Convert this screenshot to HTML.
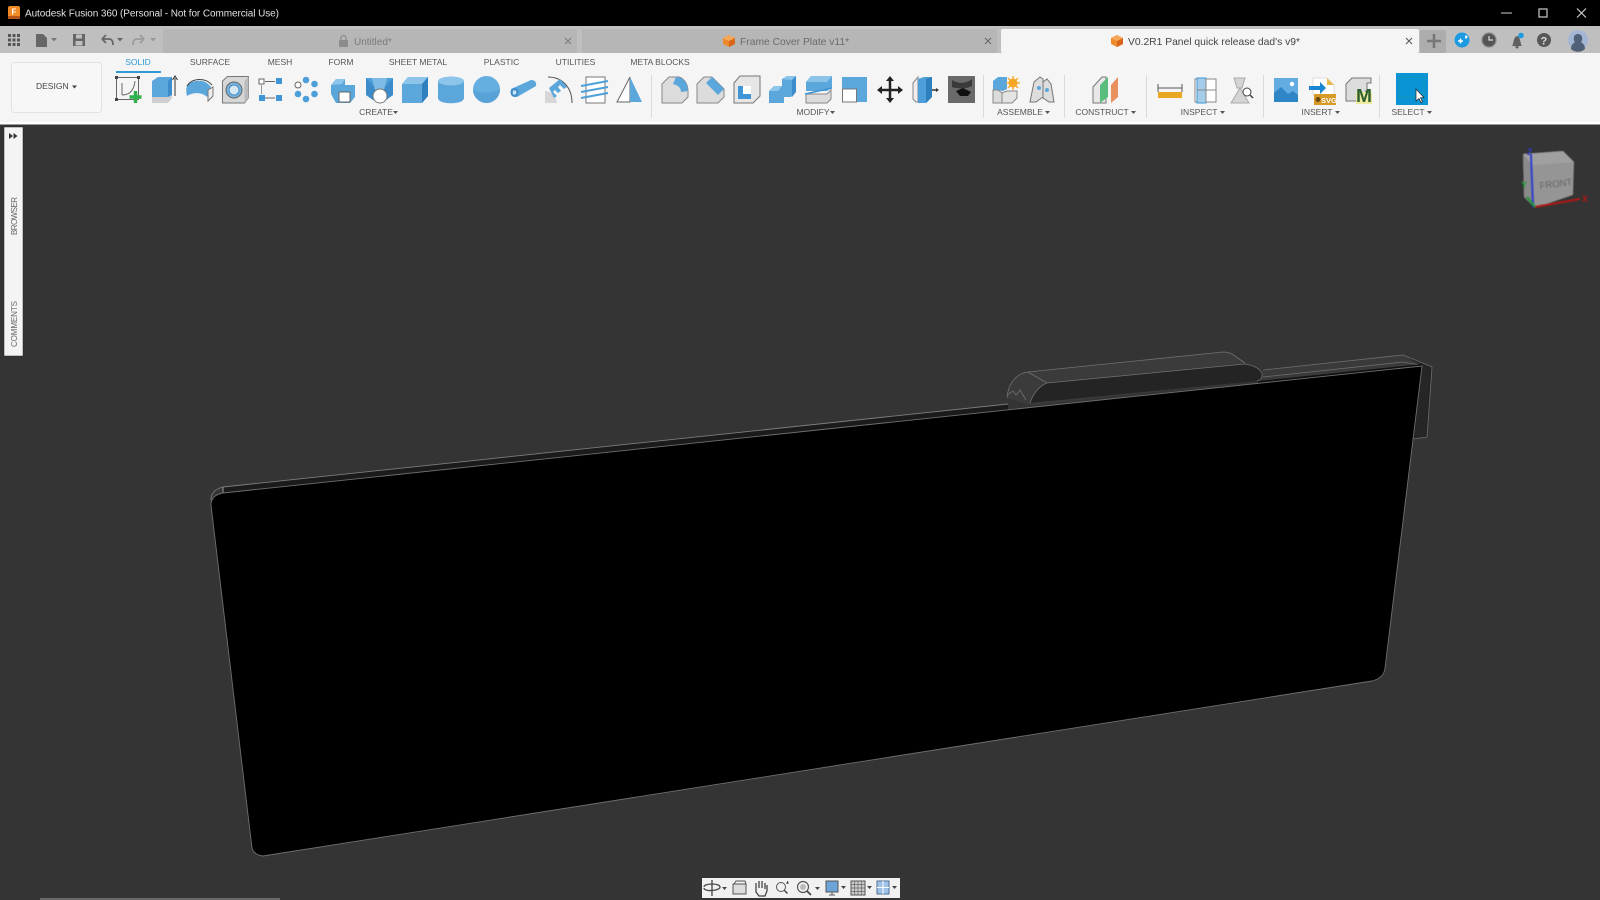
<!DOCTYPE html>
<html><head><meta charset="utf-8"><style>
html,body{margin:0;padding:0;width:1600px;height:900px;overflow:hidden;background:#343434}
svg{position:absolute;left:0;top:0;filter:blur(.3px)}
text{font-family:"Liberation Sans",sans-serif}
</style></head><body>
<svg width="1600" height="900" viewBox="0 0 1600 900" xmlns="http://www.w3.org/2000/svg">
<!-- chrome -->
<rect width="1600" height="900" fill="#343434"/>
<rect width="1600" height="26" fill="#000"/>
<rect y="26" width="1600" height="27" fill="#bfbfbf"/>
<rect y="53" width="1600" height="69" fill="#f5f5f5"/>
<rect y="122" width="1600" height="2.5" fill="#fff"/>
<!-- title -->
<rect x="8" y="6" width="12" height="13" rx="2" fill="#f08a24"/><rect x="8" y="16" width="12" height="3" fill="#b8551a"/>
<text x="11.500" y="14.500" font-size="8" font-weight="bold" fill="#fff">F</text>
<text x="25" y="16.500" font-size="10" fill="#e0e0e0" textLength="254">Autodesk Fusion 360 (Personal - Not for Commercial Use)</text>
<path d="M1501 13h11" stroke="#aaa" stroke-width="1.200"/>
<rect x="1539" y="9" width="8" height="8" fill="none" stroke="#ccc" stroke-width="1.200"/>
<path d="M1577 8.500l9 9M1586 8.500l-9 9" stroke="#ccc" stroke-width="1.200"/>
<!-- tabs -->
<rect x="163" y="29" width="414" height="24" rx="2" fill="#b6b6b6"/>
<rect x="582" y="29" width="415" height="24" rx="2" fill="#b6b6b6"/>
<rect x="1001" y="29" width="418" height="24" rx="2" fill="#f5f5f5"/>
<rect x="1420" y="30" width="26" height="23" rx="2" fill="#adadad"/>
<rect x="339" y="40" width="9" height="7" rx="1" fill="#8b8b8b"/><path d="M341 40v-2a2.500 2.500 0 0 1 5 0v2" fill="none" stroke="#8b8b8b" stroke-width="1.200"/>
<text x="354" y="45" font-size="10" fill="#7b7b7b">Untitled*</text>
<path d="M565 38l6 6M571 38l-6 6" stroke="#777" stroke-width="1"/>
<path d="M729 35l6 3v6l-6 3-6-3v-6z" fill="#ef8a2c"/><path d="M729 41l6-3v6l-6 3z" fill="#d8651a"/><path d="M729 35l6 3-6 3-6-3z" fill="#f6a85a"/>
<text x="740" y="45" font-size="10.300" fill="#6b6b6b">Frame Cover Plate v11*</text>
<path d="M985 38l6 6M991 38l-6 6" stroke="#666" stroke-width="1"/>
<path d="M1117 35l6 3v6l-6 3-6-3v-6z" fill="#ef8a2c"/><path d="M1117 41l6-3v6l-6 3z" fill="#d8651a"/><path d="M1117 35l6 3-6 3-6-3z" fill="#f6a85a"/>
<text x="1128" y="45" font-size="10.300" fill="#444">V0.2R1 Panel quick release dad's v9*</text>
<path d="M1406 38l6 6M1412 38l-6 6" stroke="#555" stroke-width="1"/>
<!-- left quick icons -->
<g fill="#555"><rect x="8" y="34" width="3" height="3"/><rect x="12.500" y="34" width="3" height="3"/><rect x="17" y="34" width="3" height="3"/><rect x="8" y="38.500" width="3" height="3"/><rect x="12.500" y="38.500" width="3" height="3"/><rect x="17" y="38.500" width="3" height="3"/><rect x="8" y="43" width="3" height="3"/><rect x="12.500" y="43" width="3" height="3"/><rect x="17" y="43" width="3" height="3"/>
<path d="M36 34h7l4 4v9H36z" fill="#666"/><path d="M51 38h6l-3 3.500z" fill="#777"/>
<path d="M73 34h12v12H73z" fill="#666"/></g>
<rect x="76" y="34.500" width="6" height="4" fill="#bfbfbf"/><rect x="75.500" y="41" width="7" height="4.500" fill="#bfbfbf"/>
<path d="M102 39h7c3 0 4 2 4 6M102 39l4-4M102 39l4 4" fill="none" stroke="#666" stroke-width="1.800"/>
<path d="M117 38h6l-3 3.500z" fill="#666"/>
<path d="M144 39h-7c-3 0-4 2-4 6M144 39l-4-4M144 39l-4 4" fill="none" stroke="#9c9c9c" stroke-width="1.800"/>
<path d="M150 38h6l-3 3.500z" fill="#999"/>
<!-- right icons -->
<path d="M1427 41h14M1434 34v14" stroke="#777" stroke-width="2.600"/>
<circle cx="1462" cy="40" r="7.500" fill="#1a9ae0"/><path d="M1458 41h5M1460.500 38.500v5M1465 37h2.500M1466 35.500v3" stroke="#fff" stroke-width="1.500"/>
<circle cx="1489" cy="40" r="7" fill="#555" stroke="#8a8a8a" stroke-width="1.200"/><path d="M1489 36v4h4" stroke="#ddd" stroke-width="1.200" fill="none"/>
<path d="M1512 46c2-2 1-9 5-10 4 1 3 8 5 10z" fill="#606060"/><circle cx="1517" cy="47" r="1.500" fill="#606060"/><circle cx="1521" cy="35.500" r="2.800" fill="#1a9ae0"/>
<circle cx="1544" cy="40" r="7" fill="#585858"/><text x="1540.500" y="44.500" font-size="11" font-weight="bold" fill="#ddd">?</text>
<circle cx="1578" cy="40" r="10" fill="#a5b6d4"/><path d="M1571 49c0-5 3-6 4-7-2-2-2-8 3-8s5 6 3 8c1 1 4 2 4 7a10 10 0 0 1-14 0z" fill="#4f6077"/>
<!-- toolbar -->
<rect x="11.500" y="62.500" width="90" height="50" rx="3" fill="#f7f7f7" stroke="#e2e2e2"/>
<text x="36" y="89" font-size="8.500" fill="#444">DESIGN</text><path d="M72 85.500h5l-2.500 3z" fill="#444"/>
<g font-size="8.500" fill="#555" text-anchor="middle">
<text x="138" y="65" fill="#2f9bd6">SOLID</text><text x="210" y="65">SURFACE</text><text x="280" y="65">MESH</text><text x="341" y="65">FORM</text><text x="418" y="65">SHEET METAL</text><text x="501.500" y="65">PLASTIC</text><text x="575.500" y="65">UTILITIES</text><text x="660" y="65">META BLOCKS</text>
<text x="376" y="115">CREATE</text><text x="813" y="115">MODIFY</text><text x="1020" y="115">ASSEMBLE</text><text x="1102" y="115">CONSTRUCT</text><text x="1199" y="115">INSPECT</text><text x="1317" y="115">INSERT</text><text x="1408" y="115">SELECT</text>
</g>
<rect x="116" y="71" width="45" height="2" fill="#2f9bd6"/>
<g fill="#555"><path d="M393 111h5l-2.500 3z"/><path d="M830 111h5l-2.500 3z"/><path d="M1045 111h5l-2.500 3z"/><path d="M1131 111h5l-2.500 3z"/><path d="M1220 111h5l-2.500 3z"/><path d="M1335 111h5l-2.500 3z"/><path d="M1427 111h5l-2.500 3z"/></g>
<g stroke="#dadada" stroke-width="1"><path d="M651.500 75v43M983.500 75v43M1064.500 75v43M1146.500 75v43M1263.500 75v43M1379.500 75v43"/></g>
<!-- 1 sketch -->
<rect x="116.500" y="77.500" width="22" height="22" fill="none" stroke="#666"/><path d="M122 83v12M122 95c8 0 12-5 13-14" fill="none" stroke="#666"/>
<g fill="#444"><rect x="115" y="76" width="3" height="3"/><rect x="137" y="76" width="3" height="3"/><rect x="115" y="98" width="3" height="3"/></g>
<path d="M135.500 91v12M129.500 97h12" stroke="#2db24b" stroke-width="3.500"/>
<!-- 2 extrude -->
<path d="M152 81l6-4h14v18l-4 6h-16z" fill="#5ba7dc"/><path d="M168 81l4-4v18l-4 6z" fill="#3d8ccb"/><path d="M152 97h16l4-2v3l-4 5h-16z" fill="#cfcfcf"/><path d="M175 96V78M172.500 80l2.500-4 2.500 4" stroke="#333" fill="none"/>
<!-- 3 revolve -->
<path d="M187 96c-2-8 0-13 5-14 10-3 15 0 19 5l-4 10c-5-5-14-5-20-1z" fill="#5ba7dc"/><path d="M187 86c5-8 18-9 25-1" fill="none" stroke="#444"/><path d="M208 90l5-3v9l-5 5z" fill="#eee" stroke="#777"/>
<!-- 4 hole -->
<path d="M222.500 81l5-4.500h21v21l-4 5.500h-22z" fill="#d7d7d7" stroke="#777"/><path d="M244.500 81l4-4.500v21l-4 5.500z" fill="#bbb"/><circle cx="234" cy="90" r="8" fill="#79b3dd" stroke="#666"/><circle cx="234" cy="90" r="5" fill="#d7e8f5" stroke="#4c8ec6"/>
<!-- 5 pattern -->
<rect x="259" y="79" width="5" height="5" fill="#fff" stroke="#666"/><rect x="276" y="78" width="6" height="6" fill="#3f95d5"/><rect x="259" y="95" width="6" height="6" fill="#3f95d5"/><rect x="276" y="95" width="6" height="6" fill="#3f95d5"/><path d="M265 81.500h10M265 98h10" stroke="#666"/><path d="M261.500 85v9" stroke="#999"/>
<!-- 6 circular pattern -->
<circle cx="298" cy="85" r="3" fill="#fff" stroke="#666"/><g fill="#4d9fd9"><circle cx="306" cy="80" r="3.300"/><circle cx="314.500" cy="84" r="3.300"/><circle cx="314.500" cy="94" r="3.300"/><circle cx="306" cy="99" r="3.300"/><circle cx="298" cy="94" r="3.300"/></g>
<!-- 7 -->
<path d="M331 85l5-6h9v6h10v12l-5 6h-14l-5-9z" fill="#5ba7dc"/><path d="M331 85l5-6h9l-3 5z" fill="#8cc4ea"/><rect x="339" y="92" width="11" height="10" fill="#fff" stroke="#666"/>
<!-- 8 loft -->
<path d="M366 78h27v17l-7 5h-13l-7-5z" fill="#4d9fd9"/><path d="M366 78l13 14v8l-6 0-7-5zM393 78l-13 14v8l6 0 7-5z" fill="#3c8ccb"/><path d="M372 78h15l-3 12h-9z" fill="#7ebce6"/><circle cx="380" cy="96" r="7" fill="#fff" stroke="#777"/>
<!-- 9 box -->
<path d="M402 84l6-7h20v19l-6 7h-20z" fill="#5ba7dc"/><path d="M402 84l6-7h20l-6 7z" fill="#8cc4ea"/><path d="M422 84l6-7v19l-6 7z" fill="#2e7fbe"/>
<!-- 10 cyl -->
<path d="M438 81v17c0 7 26 7 26 0V81z" fill="#5ba7dc"/><ellipse cx="451" cy="81" rx="13" ry="4.500" fill="#8cc4ea"/>
<!-- 11 sphere -->
<circle cx="486.500" cy="89.500" r="13.500" fill="#64aee0"/><path d="M473 89.500c6 4 21 4 27 0a13.500 13.500 0 0 1-27 0z" fill="#58a2d8"/>
<!-- 12 pipe -->
<path d="M511 89L531 80Q537 80 536 86L517 97Q510 97 511 89z" fill="#5ba7dc"/><ellipse cx="514.500" cy="92.500" rx="4" ry="4.500" fill="#3d8ccb"/><ellipse cx="514.500" cy="92.500" rx="1.800" ry="2.200" fill="#cfe5f5"/>
<!-- 13 thread -->
<path d="M545 103V91c6 0 11 5 12 12z" fill="#d7d7d7"/><path d="M548 77c14 0 24 10 24 26" fill="none" stroke="#555"/><path d="M549 88l11-9 7 8-3 2-4-4-2 2 3 4-3 2-3-3-2 2 4 4-3 2z" fill="#5ba7dc"/>
<!-- 14 coil -->
<rect x="586" y="77" width="19" height="26" fill="#fff" stroke="#777"/><path d="M581 86l27-5M581 92l27-5M581 98l27-5" stroke="#4d9fd9" stroke-width="2"/>
<!-- 15 mirror -->
<path d="M630 77l-13 25h13z" fill="#fff" stroke="#666"/><path d="M630 77l12 25h-12z" fill="#5ba7dc"/>
<!-- 16 fillet -->
<path d="M662 84l7-7h10c6 2 9 8 9 14v6l-6 6h-20z" fill="#dcdcdc" stroke="#888"/><path d="M676 77c7 0 12 6 12 14l-7 1c0-4-3-7-8-8z" fill="#5ba7dc"/>
<!-- 17 chamfer -->
<path d="M697 84l7-7h8l12 12v8l-6 6h-21z" fill="#dcdcdc" stroke="#888"/><path d="M712 77l12 12-6 6-12-12z" fill="#5ba7dc"/>
<!-- 18 shell -->
<path d="M734 83l6-7h20v20l-7 7h-19z" fill="#e6e6e6" stroke="#777"/><path d="M738 86h13v13h-13z" fill="#fff"/><path d="M738 86h5v8h8v5h-13z" fill="#3f95d5"/>
<!-- 19 combine -->
<path d="M769 91l5-5h8v-7l5-3h9v16l-5 5h-7v6l-4 0h-11z" fill="#5ba7dc"/><path d="M782 79l5-3h9l-4 4z" fill="#8cc4ea"/><path d="M792 80l4-4v16l-4 5z" fill="#3d8ccb"/><path d="M769 91l5-5h8l-4 5z" fill="#8cc4ea"/>
<!-- 20 split -->
<path d="M806 94h21l4-4v9l-4 4h-21z" fill="#dcdcdc" stroke="#888"/><path d="M806 82l5-6h21v12l-5 3h-21z" fill="#5ba7dc"/><path d="M806 82l5-6h21l-5 6z" fill="#8cc4ea"/><path d="M805 94l27-6" stroke="#3f95d5" stroke-width="1.500"/>
<!-- 21 offset -->
<rect x="842" y="77" width="25" height="25" fill="#5ba7dc"/><rect x="842.500" y="89" width="14" height="13" fill="#fff" stroke="#777"/>
<!-- 22 move -->
<path d="M890 79v22M879 90h22" stroke="#222" stroke-width="2.500"/><path d="M890 76l4 5h-8zM890 103l4-5h-8zM877 90l5-4v8zM903 90l-5-4v8z" fill="#222"/>
<!-- 23 align -->
<path d="M913 83l5-6v25h-2l-3-3z" fill="#eee" stroke="#888"/><path d="M918 79l6-2h8v20l-6 6h-8z" fill="#4d9fd9"/><path d="M926 79l6-2v20l-6 6z" fill="#2e7fbe"/><path d="M932 90h5" stroke="#333" stroke-width="1.500"/><path d="M939 90l-3-2v4z" fill="#333"/>
<!-- 24 dark photo -->
<rect x="948" y="76" width="27" height="27" fill="#6a6a6a"/><path d="M952 80c6 4 14 4 20-1v7c-6 3-14 3-20 1z" fill="#3a3a3a"/><path d="M956 91l7-3 8 4-3 4h-8z" fill="#111"/>
<!-- 25 assemble -->
<path d="M993 90v-9l5-4h9v12l-4 2z" fill="#5ba7dc"/><path d="M993 90l5 0 4 3v10h-9z" fill="#dcdcdc" stroke="#888"/><path d="M1002 93l5-2h10v7l-5 5h-10z" fill="#e4e4e4" stroke="#888"/>
<circle cx="1013" cy="83" r="4.500" fill="#f5a623"/><path d="M1013 76v14M1006 83h14M1008 78l10 10M1018 78l-10 10" stroke="#f5a623" stroke-width="1.300"/>
<!-- 26 joint -->
<path d="M1030 102l4-20 6-5 3 2v18l-7 5z" fill="#ddd" stroke="#777"/><path d="M1054 102l-3-18-4-5-4 3v16l6 4z" fill="#ddd" stroke="#777"/><circle cx="1039" cy="88" r="2" fill="#5ba7dc"/><circle cx="1047" cy="90" r="2" fill="#5ba7dc"/>
<!-- 27 construct -->
<path d="M1093 87l9-10h4v26h-13z" fill="#e8e8e8" stroke="#777"/><path d="M1100 85l8-8v20l-8 6z" fill="#58bd7d"/><path d="M1111 85l7-8v20l-7 6z" fill="#e8915c"/>
<!-- 28 measure -->
<path d="M1158 88h24M1158 84v8M1182 84v8" stroke="#555"/><rect x="1158" y="92" width="24" height="6" fill="#e8a821"/>
<!-- 29 interference -->
<rect x="1195" y="79" width="21" height="23" fill="#fff" stroke="#888"/><rect x="1197" y="78" width="9" height="25" fill="#a5cdea" stroke="#3f95d5"/><path d="M1197 90h19M1206 79v23" stroke="#888"/>
<!-- 30 section -->
<path d="M1234 78h11l-3 10h-5zM1231 103l9-15 9 15z" fill="#d4d4d4" stroke="#aaa"/><circle cx="1247" cy="92" r="4" fill="#fff" stroke="#444"/><path d="M1250 95l3 3" stroke="#444" stroke-width="1.500"/>
<!-- 31 insert image -->
<rect x="1274" y="78" width="24" height="24" fill="#62ace2"/><path d="M1274 102V93l7-6 7 7 5-3 5 4v7z" fill="#2e86c6"/><circle cx="1292" cy="84" r="2.200" fill="#fff"/>
<!-- 32 svg -->
<path d="M1313 78h14l7 7v10h-21z" fill="#fff" stroke="#ddd"/><path d="M1327 78l7 7h-7z" fill="#efb84a"/><path d="M1309 86h11v-4l6 6-6 6v-4h-11z" fill="#1a85d0"/><rect x="1314" y="94" width="22" height="11" fill="#d79a27"/><text x="1321" y="103" font-size="7.500" font-weight="bold" fill="#fff">SVG</text><circle cx="1318" cy="99.500" r="2.500" fill="#6b4a10"/>
<!-- 33 mcmaster -->
<path d="M1346 84l6-6h19v5h-4v7l-10 11h-11z" fill="#dcdcdc" stroke="#777"/><path d="M1356 92h16v12h-16z" fill="#eeeaa0"/><text x="1356" y="102" font-size="18" font-weight="bold" fill="#2e5f2e" textLength="16" lengthAdjust="spacingAndGlyphs">M</text>
<!-- 34 select -->
<rect x="1396" y="73" width="32" height="32" fill="#0a94d6"/><rect x="1399" y="77" width="25" height="20" fill="none" stroke="#1f9c9e" stroke-dasharray="2 1" stroke-width=".7"/>
<path d="M1416 89v12l3-2.500 2 4 1.500-.8-2-4h3.500z" fill="#fff" stroke="#222" stroke-width=".7"/>
<!-- left panel -->
<rect x="4" y="127" width="19" height="229" fill="#f4f4f4" stroke="#222" stroke-width=".5"/>
<path d="M9 133l4 3-4 3zM13.500 133l4 3-4 3z" fill="#333"/>
<text transform="translate(17,235) rotate(-90)" font-size="8" fill="#666" textLength="38">BROWSER</text>
<text transform="translate(17,347) rotate(-90)" font-size="8" fill="#666" textLength="46">COMMENTS</text>
<!-- model -->
<path d="M1263 370L1403 355 1432 367 1427 437 1413 439 1422 366 1263 384z" fill="#222"/>
<path d="M1263 370L1403 355 1421 365 1263 381z" fill="#3a3a3a"/>
<path d="M1422 366l8 2 -4 68-12 3z" fill="#262626"/>
<path d="M1263 370L1403 355 1432 367 1427 437 1413 439M1263 377L1403 362 1420 365" fill="none" stroke="#6e6e6e" stroke-width=".8"/>
<path d="M1007 398C1008 382 1018 373 1028 372L1223 352Q1228 352 1232 354L1245 363 1262 373 1258 381 1030 405z" fill="#3b3b3b"/>
<path d="M1030 403Q1035 388 1047 383L1245 364Q1258 366 1262 373 1263 380 1257 381z" fill="#242424"/>
<path d="M1007 398C1008 382 1018 373 1028 372L1223 352Q1228 352 1232 354L1245 363M1028 372L1047 383M1030 403Q1035 388 1047 383L1245 364Q1258 366 1262 373 1263 380 1257 381M1007 395l6-4 3 4 4-5 6 10" fill="none" stroke="#707070" stroke-width=".8"/>
<path d="M223 487L1008 404 1008 410 223 493z" fill="#1b1b1b"/>
<path d="M1258 381L1422 364 1422 366 1258 384z" fill="#111"/>
<path d="M211 500Q211 490 223 487L1008 404" fill="none" stroke="#7c7c7c" stroke-width=".9"/>
<path d="M223 487v6" stroke="#999" stroke-width="1"/>
<path d="M223 493L1422 366 1385 668Q1384 678 1372 681L263 856Q254 855 252 848L211 505Q211 495 223 493z" fill="#000" stroke="#6e6e6e" stroke-width=".9"/>
<!-- cube -->
<g style="filter:blur(.6px)">
<path d="M1523 154L1563 151 1574 162 1573 195 1535 208 1524 197z" fill="#959595"/>
<path d="M1523 154L1563 151 1574 162 1532 165z" fill="#a0a0a0"/>
<path d="M1523 154L1532 165 1535 208 1524 197z" fill="#8a8a8a"/>
<path d="M1531 155L1533 207" stroke="#2f3fd0" stroke-width="2"/><path d="M1535 207L1580 199" stroke="#b01818" stroke-width="2"/><path d="M1535 207L1527 197" stroke="#1a9a30" stroke-width="2"/>
<text x="1527" y="155" font-size="9" font-weight="bold" fill="#2f3fd0">Z</text>
<text x="1521" y="188" font-size="9" font-weight="bold" fill="#1a9a30">Y</text>
<text x="1582" y="202" font-size="9" font-weight="bold" fill="#b01818">X</text>
<text transform="translate(1540,189) rotate(-7)" font-size="9.500" fill="#666">FRONT</text>
</g>
<!-- bottom bar -->
<rect x="702" y="878" width="198" height="20" fill="#f1f1f1"/>
<rect x="40" y="898" width="240" height="2" fill="#6a6a6a"/>
<path d="M712 880v16M704 887c0-4 16-4 16 0s-16 5-16 1" fill="none" stroke="#444" stroke-width="1.300"/><path d="M722 887h5l-2.500 3z" fill="#444"/>
<rect x="733" y="884" width="13" height="10" fill="#ddd" stroke="#555"/><path d="M734 884l2-3 9 0 1 3" fill="none" stroke="#555"/>
<path d="M756 889v-6M759 888v-7M762 888v-7M765 889v-6M756 887l0 5 3 4h6l2-5v-6" fill="none" stroke="#444" stroke-width="1.300"/>
<circle cx="781" cy="887" r="4.500" fill="none" stroke="#555"/><path d="M784.500 890.500l3 3" stroke="#444" stroke-width="1.500"/><path d="M789 883h-3M787.500 881v3" stroke="#555"/>
<circle cx="803" cy="887" r="5.500" fill="none" stroke="#555" stroke-width="1.200"/><circle cx="803" cy="887" r="3" fill="#bbb"/><path d="M807 891l4 4" stroke="#444" stroke-width="1.700"/><path d="M815 887h5l-2.500 3z" fill="#444"/>
<rect x="826" y="881" width="12" height="11" fill="#6ba5d8" stroke="#555"/><path d="M829 895h6M832 892v3" stroke="#555"/><path d="M841 886h5l-2.500 3z" fill="#444"/>
<rect x="851" y="881" width="14" height="14" fill="#ccc" stroke="#555"/><path d="M854.500 881v14M858 881v14M861.500 881v14M851 884.500h14M851 888h14M851 891.500h14" stroke="#666" stroke-width=".7"/><path d="M867 886h5l-2.500 3z" fill="#444"/>
<rect x="877" y="881" width="12" height="13" fill="#9fc3e6" stroke="#4f6f95"/><path d="M883 881v13M877 887.500h12" stroke="#fff"/><path d="M892 886h5l-2.500 3z" fill="#444"/>
</svg>
</body></html>
